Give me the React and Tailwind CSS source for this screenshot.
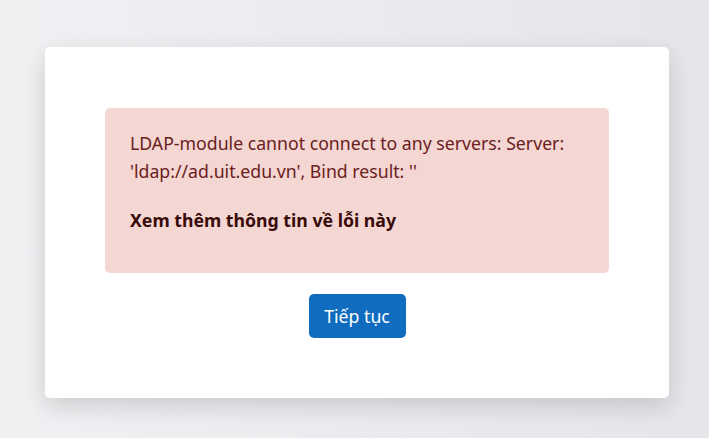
import React from "react";

const App = () => {
  return (
    <div className="min-h-[438px] w-full bg-gradient-to-r from-[#f0f1f3] to-[#e4e6e9] pt-[47px] pb-[41px] font-['Noto_Sans',sans-serif]">
      <div className="ml-[45px] w-[624px] rounded-[5px] bg-white px-[60px] pt-[61px] pb-[60px] shadow-[0_8px_24px_rgba(0,0,0,0.15)]">
        <div className="rounded-[5px] bg-[#f4d6d3] px-[25px] pt-[21px] pb-[39px] text-[#6a211c]">
          <p className="text-[17.7px] leading-[28px]">
            LDAP-module cannot connect to any servers: Server: 'ldap://ad.uit.edu.vn', Bind result: ''
          </p>
          <p className="mt-[21px] text-[17.7px] font-bold leading-[28px] text-[#3a0c09]">
            Xem thêm thông tin về lỗi này
          </p>
        </div>
        <div className="mt-[21px] flex justify-center">
          <button className="h-[44px] w-[97px] rounded-[5px] bg-[#0f6cbf] text-[17.7px] text-white">
            Tiếp tục
          </button>
        </div>
      </div>
    </div>
  );
};

export default App;
